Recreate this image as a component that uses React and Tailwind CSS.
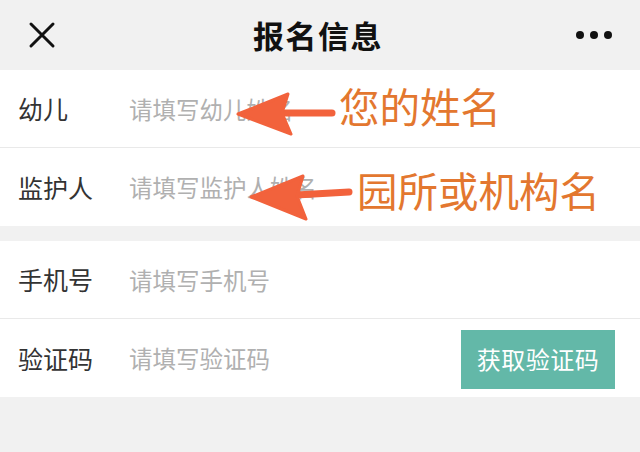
const font = { fontFamily: '"Noto Sans CJK SC", "Noto Sans", sans-serif' };

function Arrow({ tip, top, bottom, tailFrom, tailTo }) {
  return (
    <g fill="#f2623c" stroke="#f2623c" strokeLinejoin="round">
      <line
        x1={tailFrom[0]}
        y1={tailFrom[1]}
        x2={tailTo[0]}
        y2={tailTo[1]}
        strokeWidth="7"
        strokeLinecap="round"
      />
      <polygon
        points={`${tip[0]},${tip[1]} ${top[0]},${top[1]} ${top[0] - 6},${tip[1] - 1} ${bottom[0]},${bottom[1]}`}
        strokeWidth="3"
      />
    </g>
  );
}

function Row({ label, placeholder, border, children }) {
  return (
    <div
      className={
        "relative flex items-center h-[78px] bg-white pl-[18px] pr-[26px] " +
        (border ? "border-b border-[#e9e9e9]" : "")
      }
    >
      <span className="w-[111px] text-[25px] text-[#333333] leading-none">{label}</span>
      <input
        placeholder={placeholder}
        className="flex-1 min-w-0 text-[23.5px] leading-none placeholder:text-[#b0b0b0] outline-none bg-transparent"
        style={font}
      />
      {children}
    </div>
  );
}

export default function App() {
  return (
    <div className="relative w-[640px] h-[452px] bg-[#f1f1f1] overflow-hidden" style={font}>
      <header className="flex items-center justify-between h-[70px] px-[28px]">
        <svg width="28" height="28" viewBox="0 0 28 28">
          <path d="M3 3 L25 25 M25 3 L3 25" stroke="#111" strokeWidth="3" strokeLinecap="round" />
        </svg>
        <h1 className="text-[31px] font-bold text-[#111] tracking-[1.5px] pl-[4px]">报名信息</h1>
        <div className="flex gap-[6px]">
          <span className="w-[8px] h-[8px] rounded-full bg-[#111]" />
          <span className="w-[8px] h-[8px] rounded-full bg-[#111]" />
          <span className="w-[8px] h-[8px] rounded-full bg-[#111]" />
        </div>
      </header>

      <Row label="幼儿" placeholder="请填写幼儿姓名" border />
      <Row label="监护人" placeholder="请填写监护人姓名" />

      <div className="mt-[15px]">
        <Row label="手机号" placeholder="请填写手机号" border />
        <Row label="验证码" placeholder="请填写验证码">
          <button className="w-[154px] h-[59px] bg-[#63b8a8] text-white text-[24px] tracking-[0.5px] -mr-[1px] mt-[2px]">
            获取验证码
          </button>
        </Row>
      </div>

      {/* annotations drawn over the form */}
      <svg className="absolute left-0 top-0 pointer-events-none" width="640" height="452">
        <Arrow tip={[238, 114]} top={[288, 94]} bottom={[291, 134]} tailFrom={[282, 113]} tailTo={[332, 113]} />
        <Arrow tip={[251, 197]} top={[303, 176]} bottom={[306, 219]} tailFrom={[296, 195]} tailTo={[349, 192]} />
      </svg>
      <span
        className="absolute left-[339px] top-[80px] text-[40.5px] leading-[52px] text-[#e3772f]"
        style={{ textShadow: "0 0 2px #fff" }}
      >
        您的姓名
      </span>
      <span
        className="absolute left-[357px] top-[164px] text-[40.5px] leading-[52px] text-[#e3772f]"
        style={{ textShadow: "0 0 2px #fff" }}
      >
        园所或机构名
      </span>
    </div>
  );
}
